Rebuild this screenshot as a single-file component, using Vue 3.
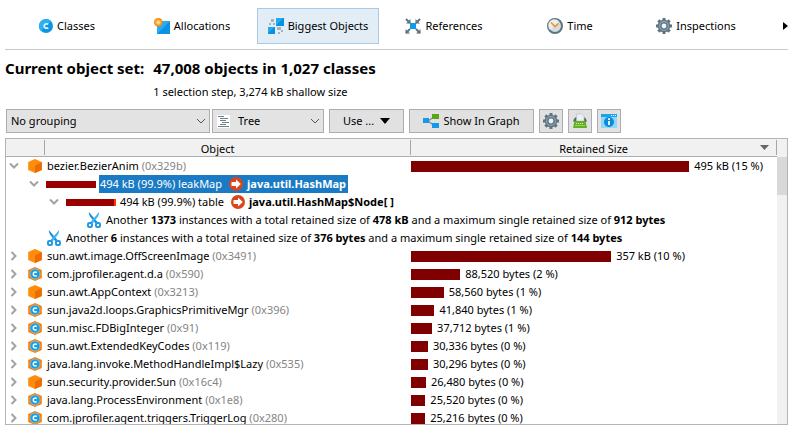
<script setup>
import { ref } from 'vue'

const tabs = [
  { label: 'Classes', icon: 'classes' },
  { label: 'Allocations', icon: 'allocations' },
  { label: 'Biggest Objects', icon: 'biggest' },
  { label: 'References', icon: 'references' },
  { label: 'Time', icon: 'time' },
  { label: 'Inspections', icon: 'gear' },
]
const active = ref('Biggest Objects')

const grouping = ref('No grouping')
const view = ref('Tree')

const rows = [
  { type: 'object', open: true, icon: 'cube', name: 'bezier.BezierAnim', id: '0x329b', size: 502000, text: '495 kB (15 %)' },
  { type: 'ref', depth: 1, share: 100, text: '494 kB (99.9%) leakMap', target: 'java.util.HashMap', selected: true },
  { type: 'ref', depth: 2, share: 96, text: '494 kB (99.9%) table', target: 'java.util.HashMap$Node[ ]' },
  { type: 'cut', depth: 3, count: '1373', total: '478 kB', max: '912 bytes' },
  { type: 'cut', depth: 1, count: '6', total: '376 bytes', max: '144 bytes' },
  { type: 'object', icon: 'cube', name: 'sun.awt.image.OffScreenImage', id: '0x3491', size: 361000, text: '357 kB (10 %)' },
  { type: 'object', icon: 'cube-class', name: 'com.jprofiler.agent.d.a', id: '0x590', size: 88520, text: '88,520 bytes (2 %)' },
  { type: 'object', icon: 'cube', name: 'sun.awt.AppContext', id: '0x3213', size: 58560, text: '58,560 bytes (1 %)' },
  { type: 'object', icon: 'cube-class', name: 'sun.java2d.loops.GraphicsPrimitiveMgr', id: '0x396', size: 41840, text: '41,840 bytes (1 %)' },
  { type: 'object', icon: 'cube-class', name: 'sun.misc.FDBigInteger', id: '0x91', size: 37712, text: '37,712 bytes (1 %)' },
  { type: 'object', icon: 'cube-class', name: 'sun.awt.ExtendedKeyCodes', id: '0x119', size: 30336, text: '30,336 bytes (0 %)' },
  { type: 'object', icon: 'cube-class', name: 'java.lang.invoke.MethodHandleImpl$Lazy', id: '0x535', size: 30296, text: '30,296 bytes (0 %)' },
  { type: 'object', icon: 'cube', name: 'sun.security.provider.Sun', id: '0x16c4', size: 26480, text: '26,480 bytes (0 %)' },
  { type: 'object', icon: 'cube-class', name: 'java.lang.ProcessEnvironment', id: '0x1e8', size: 25520, text: '25,520 bytes (0 %)' },
  { type: 'object', icon: 'cube-class', name: 'com.jprofiler.agent.triggers.TriggerLog', id: '0x280', size: 25216, text: '25,216 bytes (0 %)' },
]

// The largest object fills 76% of the column.
const barWidth = (size) => `${(size / 502000) * 76}%`
</script>

<template>
  <svg class="sprite" aria-hidden="true">
    <defs>
      <linearGradient id="g-blue" x1="0" y1="0" x2="1" y2="1">
        <stop offset="0.5" stop-color="#22a9ee" />
        <stop offset="0.5" stop-color="#0991df" />
      </linearGradient>
      <radialGradient id="g-sun">
        <stop offset="0" stop-color="#fff3c4" />
        <stop offset="0.45" stop-color="#ffb84d" />
        <stop offset="1" stop-color="#f57c00" />
      </radialGradient>
    </defs>
    <symbol id="i-classes" viewBox="0 0 16 16">
      <circle cx="9" cy="8" r="7" fill="#0b95e3" />
      <path d="M4 3A7 7 0 0 1 14 3L4 13A7 7 0 0 1 4 3Z" fill="#2bb0f2" />
      <path d="M11.200 6.400A2.300 2.300 0 1 0 11.200 9.600" fill="none" stroke="#e8f6ff" stroke-width="1.600" />
    </symbol>
    <symbol id="i-allocations" viewBox="0 0 16 16">
      <rect x="3" y="3" width="13" height="13" fill="#0b93e1" />
      <path d="M3 3H16L3 16Z" fill="#27adf0" />
      <circle cx="4.300" cy="4.300" r="4.300" fill="url(#g-sun)" />
    </symbol>
    <symbol id="i-biggest" viewBox="0 0 16 16">
      <rect x="8" y="0" width="8" height="8" fill="url(#g-blue)" />
      <rect x="0" y="9" width="7" height="7" fill="url(#g-blue)" />
      <g fill="#a3b3bf">
        <rect x="3" y="1" width="3" height="3" />
        <rect x="1" y="5" width="2" height="2" />
        <rect x="5" y="5" width="2" height="2" />
        <rect x="9" y="9" width="4" height="3" />
        <rect x="13" y="12" width="2" height="2" />
        <rect x="10" y="14" width="2" height="2" />
      </g>
    </symbol>
    <symbol id="i-references" viewBox="0 0 16 16">
      <path d="M1 1L5 5M15 1L11 5M1 15L5 11M15 15L11 11" stroke="#5e7682" stroke-width="2" />
      <path d="M5.500 1V5.500H1ZM10.500 1V5.500H15ZM0.500 15.500V11L5 15.500ZM15.500 15.500V11L11 15.500Z" fill="#5e7682" />
      <rect x="5" y="5" width="6" height="6" fill="#109ae8" />
    </symbol>
    <symbol id="i-time" viewBox="0 0 16 16">
      <circle cx="8" cy="8" r="7" fill="#d3dde2" stroke="#5d7480" stroke-width="2" />
      <path d="M3 12A6.200 6.200 0 0 1 12 3.200Z" fill="#e9eef1" />
      <path d="M4 4.500L8 8.600L11.500 5.500" fill="none" stroke="#f9901e" stroke-width="1.500" />
    </symbol>
    <symbol id="i-gear" viewBox="0 0 16 16">
      <g fill="#5d7583">
        <rect x="6.500" y="0" width="3" height="16" />
        <rect x="6.500" y="0" width="3" height="16" transform="rotate(45 8 8)" />
        <rect x="6.500" y="0" width="3" height="16" transform="rotate(90 8 8)" />
        <rect x="6.500" y="0" width="3" height="16" transform="rotate(135 8 8)" />
        <circle cx="8" cy="8" r="6.300" />
      </g>
      <circle cx="8" cy="8" r="5" fill="#8fa4b0" />
      <circle cx="8" cy="8" r="3.800" fill="#5d7583" />
      <circle cx="8" cy="8" r="2.400" fill="#f2f4f5" />
    </symbol>
    <symbol id="i-cube" viewBox="0 0 14 14">
      <path d="M7 0L13.800 3V11L7 14L.2 11V3Z" fill="#ff8c0a" />
      <path d="M7 6.500L13.800 3V11L7 14Z" fill="#ed6c02" />
    </symbol>
    <symbol id="i-cube-class" viewBox="0 0 14 14">
      <path d="M7 0L13.800 3V11L7 14L.2 11V3Z" fill="#f57f0c" />
      <circle cx="7" cy="7" r="5" fill="#149fe9" stroke="#b9cdd8" stroke-width=".6" />
      <path d="M8.700 5.600A2 2 0 1 0 8.700 8.400" fill="none" stroke="#fff" stroke-width="1.500" />
    </symbol>
    <symbol id="i-arrow" viewBox="0 0 14 14">
      <circle cx="7" cy="7" r="7" fill="#d9461c" />
      <path d="M2.500 5H7V2.500L11.800 7L7 11.500V9H2.500Z" fill="#fff" />
    </symbol>
    <symbol id="i-scissors" viewBox="0 0 14 16">
      <path d="M1.800 0Q1.500 2.500 3 4.500L8.500 11.500L10.500 10Z" fill="#1d8fd6" />
      <path d="M12.200 0Q12.500 2.500 11 4.500L5.500 11.500L3.500 10Z" fill="#3cb4f2" />
      <rect x="1" y="11" width="4" height="4" rx="1.200" fill="none" stroke="#1f9be6" stroke-width="2" />
      <rect x="9" y="11" width="4" height="4" rx="1.200" fill="none" stroke="#1f9be6" stroke-width="2" />
    </symbol>
    <symbol id="i-tree" viewBox="0 0 13 13">
      <rect width="13" height="13" fill="#fff" />
      <path d="M1 1.500H7M3 3.500H11M3 5.500H9M5 7.500H12M3 9.500H9M1 11.500H12" stroke="#6c808b" stroke-width="1" />
    </symbol>
    <symbol id="i-graph" viewBox="0 0 16 14">
      <path d="M5 7L11 3M5 7L11 11.500" stroke="#7b8b94" stroke-width="1.200" />
      <rect x="0" y="4" width="6" height="5" fill="#129be8" />
      <rect x="9" y="0" width="7" height="5" fill="#58a618" />
      <rect x="9" y="9" width="7" height="5" fill="#129be8" />
    </symbol>
    <symbol id="i-export" viewBox="0 0 16 16">
      <path d="M1.500 7L3 4.500H13L14.500 7V9H1.500Z" fill="#54646e" />
      <path d="M4.500 1H10L12 3V8H4.500Z" fill="#eceff1" stroke="#b4bec4" stroke-width=".6" />
      <path d="M2.500 8H13.500L15 15H1Z" fill="#63b023" />
      <path d="M4 10.500H12M3.500 12.500H12.500" stroke="#d6efbb" stroke-width="1" stroke-dasharray="1 1" />
    </symbol>
    <symbol id="i-info" viewBox="0 0 16 16">
      <rect width="16" height="14" y="1" fill="#8fd6fa" />
      <rect width="16" height="3" y="1" fill="#1ba3ec" />
      <rect x="10" y="2" width="1" height="1" fill="#fff" />
      <rect x="12" y="2" width="1" height="1" fill="#fff" />
      <rect x="14" y="2" width="1" height="1" fill="#fff" />
      <circle cx="8" cy="9" r="5" fill="#0a8ada" />
      <path d="M8 5.300V7M8 8V12" stroke="#fff" stroke-width="1.800" />
    </symbol>
    <symbol id="i-down" viewBox="0 0 10 6">
      <path d="M1 1L5 5L9 1" fill="none" stroke="currentColor" stroke-width="1" />
    </symbol>
  </svg>

  <main class="app">
    <nav class="nav">
      <div class="tabs">
        <button
          v-for="tab in tabs"
          :key="tab.label"
          type="button"
          class="tab"
          :class="{ active: active === tab.label }"
          @click="active = tab.label"
        >
          <svg class="icon"><use :href="`#i-${tab.icon}`" /></svg>
          <span>{{ tab.label }}</span>
        </button>
      </div>
      <button type="button" class="more" aria-label="More views">
        <svg width="5" height="8" viewBox="0 0 5 8"><path d="M0 0L5 4L0 8Z" /></svg>
      </button>
    </nav>

    <header class="summary">
      <h1>Current object set:</h1>
      <div>
        <p class="count">47,008 objects in 1,027 classes</p>
        <p class="steps">1 selection step, 3,274 kB shallow size</p>
      </div>
    </header>

    <div class="toolbar">
      <div class="picker grouping">
        <select v-model="grouping" aria-label="Grouping"><option>No grouping</option></select>
        <svg class="caret"><use href="#i-down" /></svg>
      </div>
      <div class="picker view">
        <svg class="picker-icon"><use href="#i-tree" /></svg>
        <select v-model="view" aria-label="View mode"><option>Tree</option></select>
        <svg class="caret"><use href="#i-down" /></svg>
      </div>
      <button type="button" class="tool use">
        Use ...
        <svg width="10" height="6" viewBox="0 0 10 6"><path d="M0 0H10L5 6Z" /></svg>
      </button>
      <button type="button" class="tool graph">
        <svg width="16" height="14"><use href="#i-graph" /></svg>
        Show In Graph
      </button>
      <button type="button" class="tool square" aria-label="Settings"><svg class="icon"><use href="#i-gear" /></svg></button>
      <button type="button" class="tool square" aria-label="Export"><svg class="icon"><use href="#i-export" /></svg></button>
      <button type="button" class="tool square" aria-label="Information"><svg class="icon"><use href="#i-info" /></svg></button>
    </div>

    <section class="grid">
      <div class="viewport">
        <table>
          <colgroup>
            <col class="c-mark" />
            <col class="c-object" />
            <col />
          </colgroup>
          <thead>
            <tr>
              <th><div class="head"></div></th>
              <th><div class="head object">Object</div></th>
              <th>
                <div class="head last">
                  Retained Size
                  <svg class="sort" viewBox="0 0 9 5"><path d="M0 0H9L4.500 5Z" fill="#666" /></svg>
                </div>
              </th>
            </tr>
          </thead>
          <tbody>
            <tr v-for="(row, i) in rows" :key="i">
              <template v-if="row.type === 'object'">
                <td colspan="2">
                  <div class="cell">
                    <svg class="chevron" :class="{ open: row.open }" viewBox="0 0 10 10">
                      <path d="M2.500 1L6.500 5L2.500 9" />
                    </svg>
                    <svg class="node"><use :href="`#i-${row.icon}`" /></svg>
                    <span>{{ row.name }} <span class="id">({{ row.id }})</span></span>
                  </div>
                </td>
                <td>
                  <div class="size">
                    <span class="bar" :style="{ width: barWidth(row.size) }"></span>
                    <span>{{ row.text }}</span>
                  </div>
                </td>
              </template>
              <td v-else-if="row.type === 'ref'" colspan="3">
                <div class="cell" :class="`depth-${row.depth}`">
                  <svg class="chevron open" viewBox="0 0 10 10"><path d="M2.500 1L6.500 5L2.500 9" /></svg>
                  <span class="share"><span :style="{ width: `${row.share}%` }"></span></span>
                  <span class="link" :class="{ selected: row.selected }">
                    {{ row.text }}
                    <svg class="node"><use href="#i-arrow" /></svg>
                    <b>{{ row.target }}</b>
                  </span>
                </div>
              </td>
              <td v-else colspan="3">
                <div class="cell cut" :class="`depth-${row.depth}`">
                  <svg class="scissors"><use href="#i-scissors" /></svg>
                  <span>Another <b>{{ row.count }}</b> instances with a total retained size of <b>{{ row.total }}</b> and a maximum single retained size of <b>{{ row.max }}</b></span>
                </div>
              </td>
            </tr>
          </tbody>
        </table>
      </div>
      <div class="scroll"><div class="thumb"></div></div>
    </section>
  </main>
</template>

<style>
body {
  background: #fff;
}
</style>

<style scoped>
.app {
  box-sizing: border-box;
  height: 100vh;
  padding: 0 5px 8px;
  display: flex;
  flex-direction: column;
  font: 11px/18px "Noto Sans", "Open Sans", sans-serif;
  color: #000;
  white-space: nowrap;
}
.sprite {
  position: absolute;
  width: 0;
  height: 0;
}
button,
select {
  font: inherit;
  color: inherit;
  margin: 0;
}
.icon {
  width: 16px;
  height: 16px;
  flex: none;
}
.nav {
  display: flex;
  padding-top: 8px;
  padding-bottom: 5px;
  border-bottom: 1px solid #c8c8c8;
}
.tabs {
  flex: 1;
  display: grid;
  grid-template-columns: repeat(6, 1fr);
  gap: 4px;
}
.tab {
  display: flex;
  align-items: center;
  justify-content: center;
  gap: 4px;
  height: 36px;
  padding: 0;
  background: none;
  border: 1px solid transparent;
}
.tab.active {
  background: #e3edf6;
  border-color: #a9c9e4;
}
.more {
  width: 31px;
  padding: 0;
  border: 0;
  background: none;
  text-align: right;
}
.summary {
  display: flex;
  gap: 9px;
  padding-top: 8px;
}
.summary h1,
.summary p {
  margin: 0;
}
.summary h1,
.summary .count {
  font-size: 15px;
  font-weight: 700;
  line-height: 20px;
}
.summary .steps {
  padding-top: 4px;
  line-height: 20px;
}
.toolbar {
  display: flex;
  gap: 5px;
  padding: 7px 1px 5px;
}
.picker {
  position: relative;
  height: 24px;
}
.grouping {
  width: 204px;
  margin-right: -3px;
}
.view {
  width: 112px;
}
.picker select {
  appearance: none;
  width: 100%;
  height: 24px;
  padding: 0 24px 0 4px;
  background: #e3e3e3;
  border: 1px solid #adadad;
  border-radius: 0;
}
.view select {
  padding-left: 25px;
}
.picker-icon {
  position: absolute;
  left: 5px;
  top: 6px;
  width: 13px;
  height: 13px;
}
.caret {
  position: absolute;
  right: 4px;
  top: 9px;
  width: 10px;
  height: 6px;
  color: #555;
  pointer-events: none;
}
.tool {
  display: flex;
  align-items: center;
  justify-content: center;
  height: 24px;
  padding: 0;
  background: #e1e1e1;
  border: 1px solid #adadad;
}
.use {
  width: 75px;
  gap: 6px;
}
.graph {
  width: 125px;
  gap: 4px;
}
.square {
  width: 24px;
}
.grid {
  flex: 1;
  min-height: 0;
  display: flex;
  border: 1px solid #b4b4b4;
}
.viewport {
  flex: 1;
  min-width: 0;
  overflow: hidden;
}
table {
  width: 100%;
  table-layout: fixed;
  border-collapse: collapse;
}
.c-mark {
  width: 39px;
}
.c-object {
  width: 47.5%;
}
th,
td {
  padding: 0;
  font-weight: 400;
  text-align: left;
}
th {
  height: 17px;
  background: #f1f1f1;
  border-bottom: 1px solid #adadad;
}
.head {
  position: relative;
  height: 15px;
  line-height: 17px;
  border-right: 1px solid #a6a6a6;
  text-align: center;
}
.object {
  padding-right: 20px;
}
.sort {
  position: absolute;
  right: 7px;
  top: 5px;
  width: 9px;
  height: 5px;
}
.cell,
.size {
  display: flex;
  align-items: center;
  height: 18px;
  overflow: hidden;
}
.cell {
  padding-left: 3px;
}
.cell.depth-1 {
  padding-left: 23px;
}
.cell.depth-2 {
  padding-left: 43px;
}
.cut.depth-1 {
  padding-left: 41px;
}
.cut.depth-3 {
  padding-left: 81px;
}
.chevron {
  width: 10px;
  height: 10px;
  flex: none;
  fill: none;
  stroke: #a2a2a2;
  stroke-width: 2;
}
.chevron.open {
  transform: rotate(90deg);
}
.node {
  width: 14px;
  height: 14px;
  flex: none;
}
.chevron + .node {
  margin: 0 5px 0 9px;
}
.id {
  color: #848484;
}
.share {
  width: 50px;
  height: 7px;
  margin: 0 3px 0 7px;
  flex: none;
  background: #ff3510;
}
.share span {
  display: block;
  height: 7px;
  background: #990000;
}
.link {
  display: flex;
  align-items: center;
  gap: 4px;
  padding: 0 2px 0 1px;
}
.link .node {
  margin-left: 3px;
}
.selected {
  background: #1a7bc4;
  color: #fff;
}
.scissors {
  width: 14px;
  height: 16px;
  flex: none;
  margin-right: 5px;
}
.bar {
  height: 11px;
  flex: none;
  background: #800000;
  margin-right: 5px;
}
.scroll {
  width: 10px;
  padding-top: 18px;
  background: #f1f1f1;
}
.thumb {
  height: 38px;
  background: #d8d8d8;
}
</style>
